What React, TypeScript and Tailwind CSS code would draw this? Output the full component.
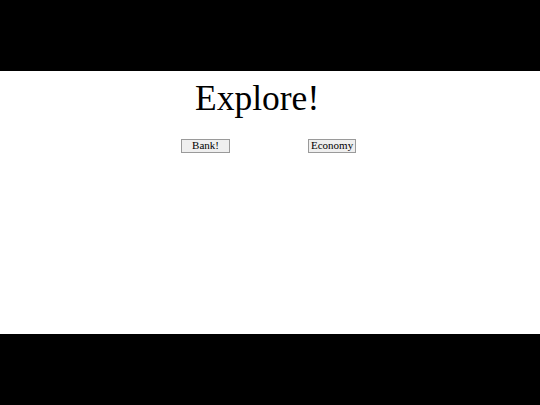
export default function App() {
  return (
    <div className="flex h-[405px] w-[540px] flex-col bg-black font-['Liberation_Serif',serif] text-black">
      <div className="h-[71px] shrink-0 bg-black" />

      <main className="flex flex-1 flex-col bg-white">
        <h1 className="mt-[9px] pl-[195px] text-[35.5px] leading-[36px] font-normal">
          Explore!
        </h1>

        <div className="mt-[23px] flex items-center gap-[78px] pl-[181px]">
          <button className="h-[14px] w-[49px] border border-[#9a9a9a] bg-[#efefef] pb-[2px] text-[11px] leading-[11px]">
            Bank!
          </button>
          <button className="h-[14px] w-[48px] border border-[#9a9a9a] bg-[#efefef] px-[2px] pb-[2px] text-[11px] leading-[11px]">
            Economy
          </button>
        </div>
      </main>

      <div className="h-[71px] shrink-0 bg-black" />
    </div>
  )
}
